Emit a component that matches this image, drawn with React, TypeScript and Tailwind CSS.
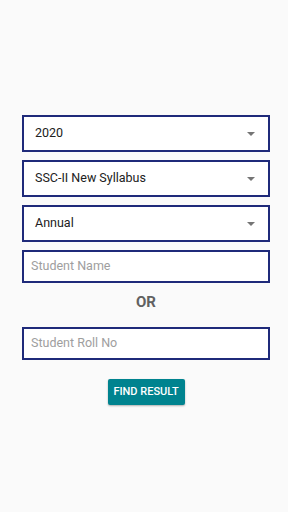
import React from 'react'

function Caret() {
  return (
    <svg width="8" height="4" viewBox="0 0 8 4" className="shrink-0">
      <path d="M0 0 L8 0 L4 4 Z" fill="#757575" />
    </svg>
  )
}

function Spinner({ value }: { value: string }) {
  return (
    <div className="flex h-[37px] items-center justify-between border-2 border-[#1f2a7a] bg-white pl-[11px] pr-[13px]">
      <span className="text-[12.5px] text-[#212121]">{value}</span>
      <Caret />
    </div>
  )
}

function Field({ hint }: { hint: string }) {
  return (
    <div className="flex h-[33px] items-center border-2 border-[#1f2a7a] bg-white pl-[7px]">
      <span className="text-[12.5px] text-[#9e9e9e]">{hint}</span>
    </div>
  )
}

export default function App() {
  return (
    <div
      className="h-[512px] w-[288px] bg-[#fafafa] pl-[22px] pr-[18px] pt-[115px]"
      style={{ fontFamily: 'Roboto, "Liberation Sans", sans-serif' }}
    >
      <div className="flex flex-col gap-[8px]">
        <Spinner value="2020" />
        <Spinner value="SSC-II New Syllabus" />
        <Spinner value="Annual" />
        <Field hint="Student Name" />
      </div>
      <div className="mt-[9px] text-center text-[15px] font-bold leading-[20px] text-[#616161]">OR</div>
      <div className="mt-[15px]">
        <Field hint="Student Roll No" />
      </div>
      <div className="mt-[19px] flex justify-center">
        <button className="h-[26px] w-[77px] rounded-[2px] bg-[#00838f] text-[11px] font-medium text-white shadow-[0_1px_2px_rgba(0,0,0,0.3)]">
          FIND RESULT
        </button>
      </div>
    </div>
  )
}
